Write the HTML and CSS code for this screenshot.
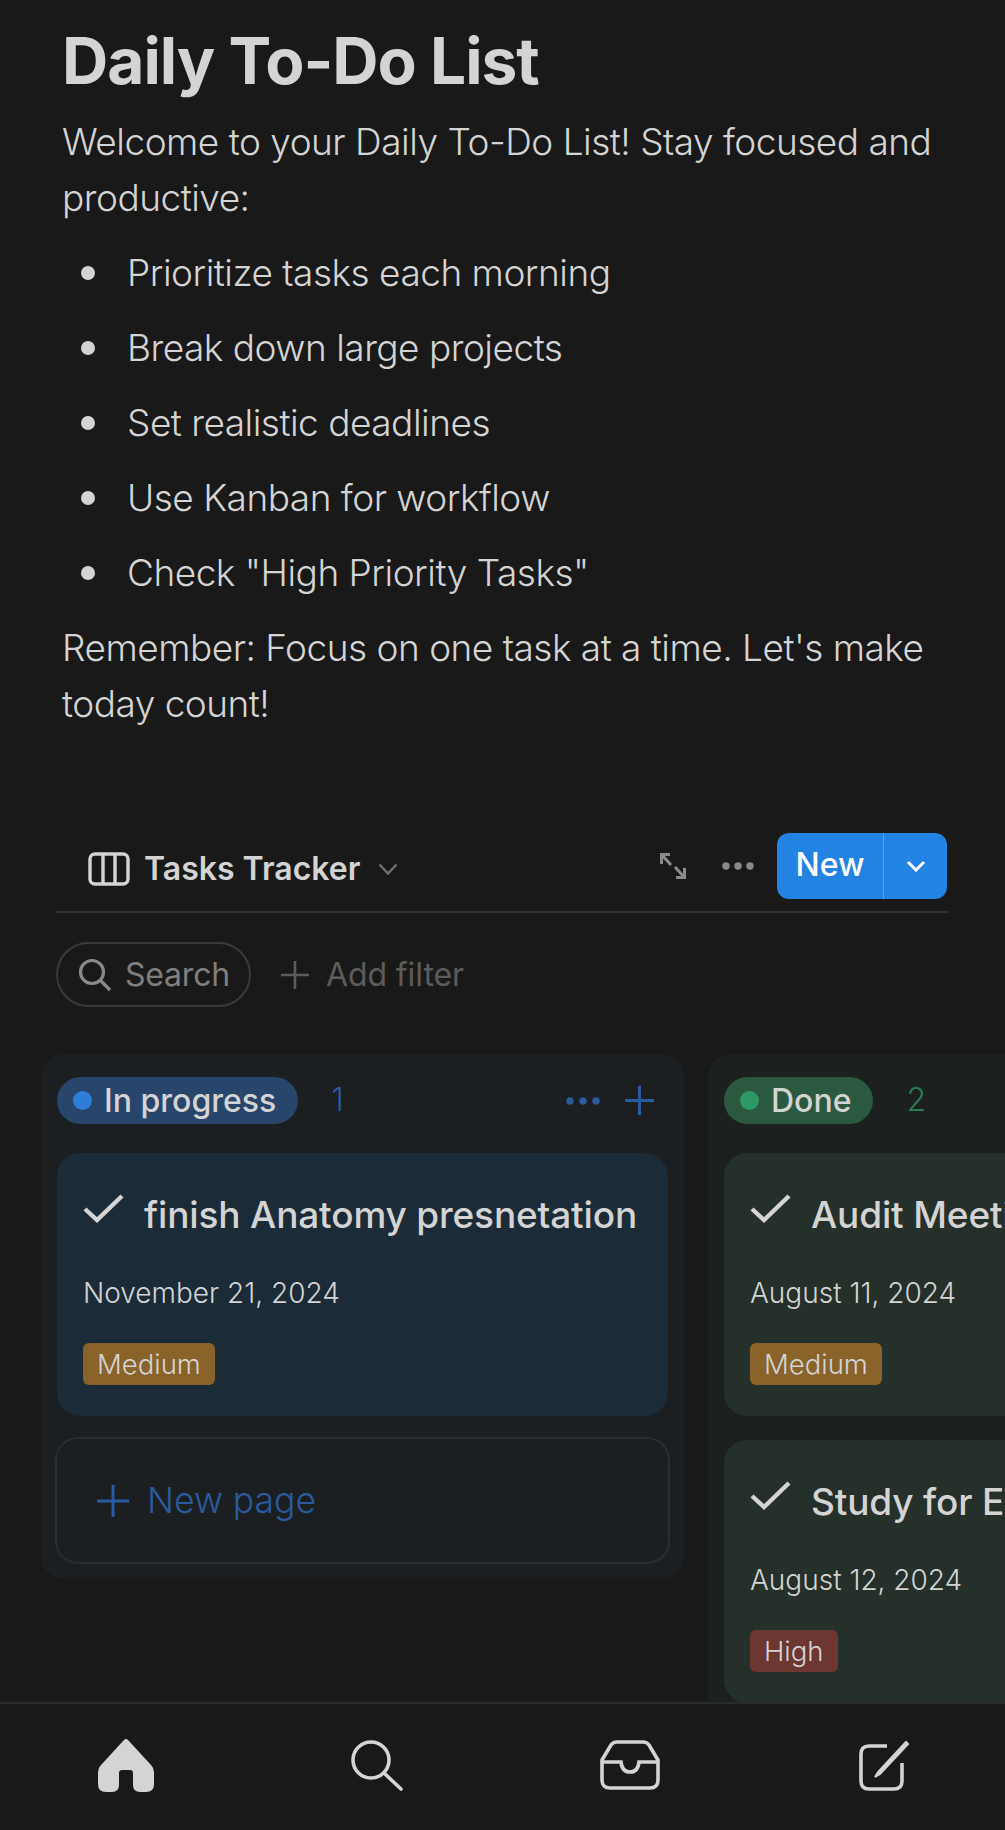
FILE: index.html
```html
<!DOCTYPE html>
<html lang="en">
<head>
    <meta charset="UTF-8">
    <meta name="viewport" content="width=device-width, initial-scale=1.0">
    <title>Daily To-Do List</title>
    <link rel="stylesheet" href="styles.css">
</head>
<body>

    <div class="page">
        <main class="content">
            <section class="intro">
                <h1>Daily To-Do List</h1>
                <p>Welcome to your Daily To-Do List! Stay focused and productive:</p>
                <ul>
                    <li>Prioritize tasks each morning</li>
                    <li>Break down large projects</li>
                    <li>Set realistic deadlines</li>
                    <li>Use Kanban for workflow</li>
                    <li>Check "High Priority Tasks"</li>
                </ul>
                <p>Remember: Focus on one task at a time. Let's make today count!</p>
            </section>

            <section class="db-header">
                <div class="view-tab">
                    <svg width="42" height="34" viewBox="0 0 42 34" fill="none" stroke="#d4d4d4" stroke-width="3.4">
                        <rect x="2" y="2" width="38" height="30" rx="5"/>
                        <path d="M15 2v30M27 2v30"/>
                    </svg>
                    <span>Tasks Tracker</span>
                    <svg class="tab-chevron" width="20" height="12" viewBox="0 0 20 12" fill="none" stroke="#6f6f6f" stroke-width="2.4">
                        <path d="M1.5 1.5L10 10.5L18.5 1.5"/>
                    </svg>
                </div>
                <div class="db-actions">
                    <svg width="28" height="28" viewBox="0 0 28 28" fill="none" stroke="#8a8a8a" stroke-width="3">
                        <path d="M2.5 2.5L12 13M16 15L25.5 25.5M2.5 12V2.5H11M25.5 16V25.5H17"/>
                    </svg>
                    <svg class="more" width="32" height="8" viewBox="0 0 32 8" fill="#8a8a8a">
                        <circle cx="4" cy="4" r="3.7"/><circle cx="16" cy="4" r="3.7"/><circle cx="28" cy="4" r="3.7"/>
                    </svg>
                    <div class="new-btn">
                        <span class="new-label">New</span>
                        <span class="new-arrow">
                            <svg width="20" height="12" viewBox="0 0 20 12" fill="none" stroke="#fff" stroke-width="3">
                                <path d="M2 2L10 10L18 2"/>
                            </svg>
                        </span>
                    </div>
                </div>
            </section>

            <section class="filters">
                <div class="search-pill">
                    <svg width="34" height="34" viewBox="0 0 34 34" fill="none" stroke="#8a8a8a" stroke-width="3.2">
                        <circle cx="14" cy="14" r="11.5"/><path d="M22.5 22.5L32 32"/>
                    </svg>
                    <span>Search</span>
                </div>
                <div class="add-filter">
                    <svg width="28" height="28" viewBox="0 0 28 28" stroke="#5c5c5c" stroke-width="2.6">
                        <path d="M14 0V28M0 14H28"/>
                    </svg>
                    <span>Add filter</span>
                </div>
            </section>

            <section class="board">
                <div class="column column-blue">
                    <div class="column-head">
                        <span class="status"><i class="dot"></i>In progress</span>
                        <span class="count">1</span>
                        <span class="column-tools">
                            <svg width="34" height="8" viewBox="0 0 34 8" fill="#2b5a9e">
                                <circle cx="4" cy="4" r="3.7"/><circle cx="17" cy="4" r="3.7"/><circle cx="30" cy="4" r="3.7"/>
                            </svg>
                            <svg width="29" height="29" viewBox="0 0 29 29" stroke="#2b5a9e" stroke-width="3">
                                <path d="M14.5 0V29M0 14.5H29"/>
                            </svg>
                        </span>
                    </div>
                    <article class="card">
                        <div class="card-title">
                            <svg width="41" height="29" viewBox="0 0 41 29" fill="none" stroke="#d4d4d4" stroke-width="4.4">
                                <path d="M2 15L14 26L39 2"/>
                            </svg>
                            <span>finish Anatomy presnetation</span>
                        </div>
                        <div class="card-date">November 21, 2024</div>
                        <span class="tag tag-medium">Medium</span>
                    </article>
                    <div class="new-page">
                        <svg width="32" height="32" viewBox="0 0 32 32" stroke="#2b5a9e" stroke-width="3">
                            <path d="M16 0V32M0 16H32"/>
                        </svg>
                        <span>New page</span>
                    </div>
                </div>

                <div class="column column-green">
                    <div class="column-head">
                        <span class="status"><i class="dot"></i>Done</span>
                        <span class="count">2</span>
                    </div>
                    <article class="card">
                        <div class="card-title">
                            <svg width="41" height="29" viewBox="0 0 41 29" fill="none" stroke="#d4d4d4" stroke-width="4.4">
                                <path d="M2 15L14 26L39 2"/>
                            </svg>
                            <span>Audit Meeting</span>
                        </div>
                        <div class="card-date">August 11, 2024</div>
                        <span class="tag tag-medium">Medium</span>
                    </article>
                    <article class="card">
                        <div class="card-title">
                            <svg width="41" height="29" viewBox="0 0 41 29" fill="none" stroke="#d4d4d4" stroke-width="4.4">
                                <path d="M2 15L14 26L39 2"/>
                            </svg>
                            <span>Study for Exam</span>
                        </div>
                        <div class="card-date">August 12, 2024</div>
                        <span class="tag tag-high">High</span>
                    </article>
                </div>
            </section>
        </main>

        <nav class="bottom-bar">
            <svg width="56" height="53" viewBox="0 0 56 53" fill="#d4d4d4">
                <path d="M26 1Q28 -1 30 1L53 26Q56 29 56 33V45Q56 53 48 53H42Q35 53 35 46V34Q35 31 32 31H24Q21 31 21 34V46Q21 53 14 53H8Q0 53 0 45V33Q0 29 3 26Z"/>
            </svg>
            <svg width="52" height="51" viewBox="0 0 52 51" fill="none" stroke="#d4d4d4" stroke-width="3.6">
                <circle cx="20" cy="20" r="18"/>
                <path d="M33 33L50 49" stroke-linecap="round"/>
            </svg>
            <svg class="nav-inbox" width="60" height="50" viewBox="0 0 60 50" fill="none" stroke="#d4d4d4" stroke-width="3.6">
                <path d="M2 20L11 5Q13 2 17 2H43Q47 2 49 5L58 20V40Q58 48 50 48H10Q2 48 2 40Z"/>
                <path d="M2 22H21Q22 32 30 32Q38 32 39 22H58"/>
            </svg>
            <svg class="nav-edit" width="50" height="51" viewBox="0 0 50 51" fill="none" stroke="#d4d4d4" stroke-width="3.6">
                <path d="M28 6H10Q2 6 2 14V41Q2 49 10 49H35Q43 49 43 41V23"/>
                <path d="M47 2L19 32L16 37L21 34L49 4Z" fill="#d4d4d4" stroke-width="2"/>
            </svg>
        </nav>
    </div>

</body>
</html>
```

FILE: styles.css
```css
body {
    margin: 0;
    background-color: #191919;
    color: #d4d4d4;
    font-family: Inter, "Liberation Sans", sans-serif;
}

svg {
    display: block;
    flex-shrink: 0;
}

.page {
    height: 1830px;
    display: flex;
    flex-direction: column;
    overflow: hidden;
}

.content {
    flex: 1;
    min-height: 0;
    overflow: hidden;
}

/* intro text */
.intro {
    padding: 27px 50px 0 62px;
}

.intro h1 {
    margin: 0 0 20px;
    font-size: 64px;
    line-height: 67px;
    font-weight: 700;
    letter-spacing: -1px;
}

.intro p {
    margin: 0;
    font-size: 37px;
    font-weight: 350;
    line-height: 56px;
    letter-spacing: -0.5px;
}

.intro ul {
    list-style: none;
    margin: 19px 0;
    padding: 0;
}

.intro li {
    display: flex;
    align-items: center;
    gap: 32px;
    margin-bottom: 19px;
    padding-left: 19px;
    font-size: 37px;
    font-weight: 350;
    line-height: 56px;
    letter-spacing: -0.5px;
}

.intro li:last-child {
    margin-bottom: 0;
}

.intro li::before {
    content: "";
    width: 14px;
    height: 14px;
    border-radius: 50%;
    background-color: #d4d4d4;
}

/* database header */
.db-header {
    display: flex;
    align-items: center;
    justify-content: space-between;
    margin: 101px 56px 0;
    padding: 0 2px 12px 32px;
    border-bottom: 2px solid #2f2f2f;
}

.view-tab {
    display: flex;
    align-items: center;
    gap: 14px;
    margin-top: 5px;
    font-size: 32px;
    font-weight: 600;
}

.tab-chevron {
    margin-left: 4px;
}

.db-actions {
    display: flex;
    align-items: center;
}

.more {
    margin: 0 23px 0 35px;
}

.new-btn {
    display: flex;
    height: 66px;
    border-radius: 12px;
    background-color: #2383e2;
    color: #fff;
    font-size: 32px;
    font-weight: 500;
}

.new-label {
    width: 106px;
    line-height: 64px;
    text-align: center;
}

.new-arrow {
    width: 63px;
    display: flex;
    align-items: center;
    justify-content: center;
    border-left: 1px solid #5ba3ea;
}

/* search and filter */
.filters {
    display: flex;
    align-items: center;
    gap: 30px;
    margin: 29px 56px 0;
}

.search-pill {
    display: flex;
    align-items: center;
    gap: 13px;
    height: 65px;
    box-sizing: border-box;
    padding: 0 19px 0 20px;
    border: 2px solid #3a3a3a;
    border-radius: 33px;
    color: #7f7f7f;
    font-size: 32px;
    letter-spacing: -0.2px;
}

.add-filter {
    display: flex;
    align-items: center;
    gap: 17px;
    color: #5c5c5c;
    font-size: 32px;
    letter-spacing: -0.1px;
}

/* board */
.board {
    display: flex;
    align-items: flex-start;
    gap: 24px;
    margin: 47px 0 0 41px;
}

.column {
    flex: 0 0 643px;
    box-sizing: border-box;
    padding: 23px 16px 15px;
    border-radius: 23px;
}

.column-blue {
    background-color: #1b1f22;
}

.column-green {
    background-color: #1c201f;
}

.column-head {
    display: flex;
    align-items: center;
    height: 47px;
    margin-bottom: 29px;
}

.status {
    display: flex;
    align-items: center;
    height: 47px;
    padding: 0 22px 0 16px;
    border-radius: 24px;
    font-size: 32px;
    font-weight: 500;
}

.dot {
    width: 19px;
    height: 19px;
    margin-right: 12px;
    border-radius: 50%;
}

.count {
    margin-left: 33px;
    margin-bottom: 2px;
    font-size: 32px;
    font-weight: 350;
}

.column-tools {
    display: flex;
    align-items: center;
    gap: 25px;
    margin-left: auto;
    margin-right: 14px;
}

.column-blue .status {
    background-color: #28456c;
}

.column-blue .dot {
    background-color: #2e7dd6;
}

.column-blue .count {
    color: #2b5a9e;
}

.column-green .status {
    background-color: #2b593f;
}

.column-green .dot {
    background-color: #2d9964;
}

.column-green .count {
    color: #2d7a55;
}

/* cards */
.card {
    box-sizing: border-box;
    height: 263px;
    margin-bottom: 24px;
    padding: 41px 26px 0;
    border-radius: 23px;
}

.column-blue .card {
    background-color: #1b2b38;
}

.column-green .card {
    background-color: #25302a;
}

.card-title {
    display: flex;
    align-items: flex-start;
    gap: 20px;
    font-size: 37px;
    font-weight: 450;
    line-height: 42px;
    letter-spacing: -0.15px;
    white-space: nowrap;
}

.card-date {
    margin-top: 39px;
    font-size: 28px;
    font-weight: 350;
    line-height: 36px;
}

.tag {
    display: inline-block;
    margin-top: 32px;
    padding: 0 14px;
    border-radius: 6px;
    font-size: 27.5px;
    font-weight: 350;
    line-height: 42px;
}

.tag-medium {
    background-color: #89632a;
}

.tag-high {
    background-color: #6e3630;
}

.new-page {
    display: flex;
    align-items: center;
    gap: 18px;
    height: 127px;
    box-sizing: border-box;
    margin: -3px -2px 0;
    padding-left: 40px;
    border: 2px solid #2a2d30;
    border-radius: 23px;
    color: #2b5a9e;
    font-size: 35.5px;
    font-weight: 350;
}

/* bottom nav */
.bottom-bar {
    flex: 0 0 128px;
    display: grid;
    grid-template-columns: repeat(4, 1fr);
    align-items: center;
    justify-items: center;
    box-sizing: border-box;
    padding-bottom: 4px;
    border-top: 2px solid #2a2a2a;
    background-color: #191919;
}

.nav-inbox {
    margin-left: 3px;
}

.nav-edit {
    margin-left: 9px;
}
```
